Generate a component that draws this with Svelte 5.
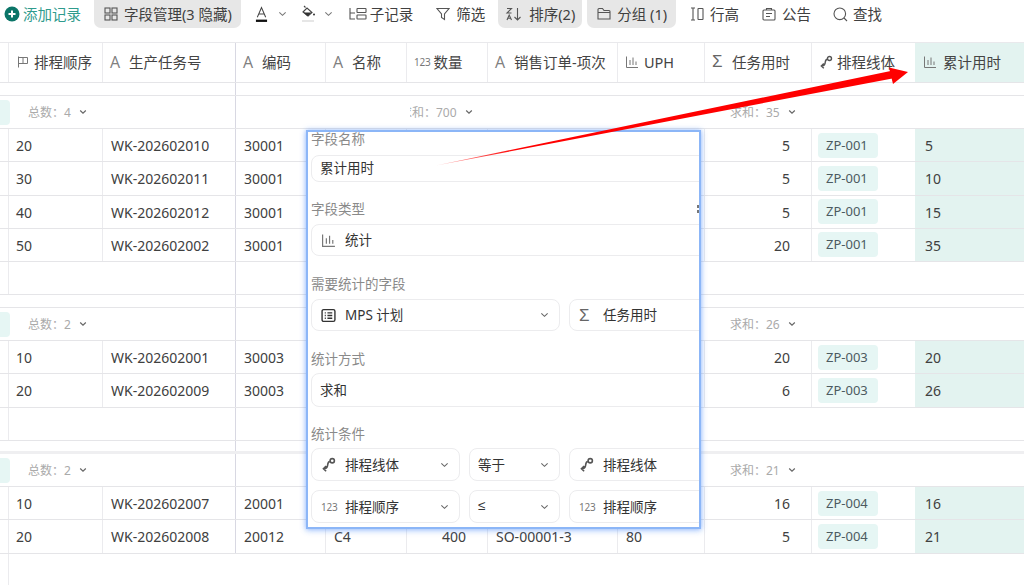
<script>
  const cols = [
    { t: '排程顺序', i: 'flag' }, { t: '生产任务号', i: 'A' }, { t: '编码', i: 'A' }, { t: '名称', i: 'A' },
    { t: '数量', i: '123' }, { t: '销售订单-项次', i: 'A' }, { t: 'UPH', i: 'bar' }, { t: '任务用时', i: 'sum' },
    { t: '排程线体', i: 'line' }, { t: '累计用时', i: 'bar' }
  ];
  const groups = [
    { total: 4, qty: '700', sum: 35, thick: false, rows: [
      [20,'WK-202602010','30001','','','','',5,'ZP-001',5],
      [30,'WK-202602011','30001','','','','',5,'ZP-001',10],
      [40,'WK-202602012','30001','','','','',5,'ZP-001',15],
      [50,'WK-202602002','30001','','','','',20,'ZP-001',35]
    ]},
    { total: 2, qty: '', sum: 26, thick: false, rows: [
      [10,'WK-202602001','30003','','','','',20,'ZP-003',20],
      [20,'WK-202602009','30003','','','','',6,'ZP-003',26]
    ]},
    { total: 2, qty: '', sum: 21, thick: true, rows: [
      [10,'WK-202602007','20001','','','','',16,'ZP-004',16],
      [20,'WK-202602008','20012','C4',400,'SO-00001-3',80,5,'ZP-004',21]
    ]}
  ];
</script>

{#snippet icon(n)}
  {#if n === 'A'}<span class="ic-a">A</span>
  {:else if n === '123'}<span class="ic-n">123</span>
  {:else if n === 'sum'}<span class="ic-s">Σ</span>
  {:else if n === 'flag'}
    <svg class="ic" viewBox="0 0 14 14"><path d="M2.500 1.500v11M2.500 2.500h9v6h-9M7 2.500v6" /></svg>
  {:else if n === 'bar'}
    <svg class="ic bar" viewBox="0 0 14 14"><path d="M1.500 1.500v11h11.500M5 5v5M8 2.500v7.500M11 6.500v3.500" /></svg>
  {:else if n === 'line'}
    <svg class="ic line" viewBox="0 0 14 14"><circle cx="10.500" cy="3.500" r="2" /><path d="M8.300 4.200c-2.300.3-1.800 2.500-2.300 4.300-.3 1.300-1.500 2.500-3.500 2.500M4.800 8.500 2.300 11l2.500 2.300" /></svg>
  {:else if n === 'list'}
    <svg class="ic dark" viewBox="0 0 14 14"><rect x="1" y="1.500" width="12" height="11" rx="1.500" /><path d="M3.500 4.500h1M6 4.500h4.500M3.500 7h1M6 7h4.500M3.500 9.500h1M6 9.500h4.500" /></svg>
  {/if}
{/snippet}

{#snippet chev(cls)}
  <svg class="chev {cls}" viewBox="0 0 10 6"><path d="M1.500 1.200 5 4.500l3.500-3.300" /></svg>
{/snippet}

<div class="page">
  <div class="toolbar">
    <div class="tool add">
      <svg class="plus" viewBox="0 0 16 16"><circle cx="8" cy="8" r="7.500" /><path d="M8 4.500v7M4.500 8h7" /></svg>
      <span>添加记录</span>
    </div>
    <div class="tool btn manage">
      <svg class="tic grid4" viewBox="0 0 14 14"><rect x="1" y="1" width="5" height="5" /><rect x="8" y="1" width="5" height="5" /><rect x="1" y="8" width="5" height="5" /><rect x="8" y="8" width="5" height="5" /></svg>
      <span>字段管理(3 隐藏)</span>
    </div>
    <div class="tool fontc">
      <svg class="fa" viewBox="0 0 14 18"><path class="thin" d="M2.500 12 7 1.500 11.500 12M4 8.500h6" /><rect x="1" y="14.500" width="12" height="2.500" /></svg>
      {@render chev('c1')}
    </div>
    <div class="tool bucket">
      <svg class="fb" viewBox="0 0 15 18"><path class="thin" d="M3 1l1.500 1.500M2 7l4-4 5 4.500-4 3.500z" /><path d="M2.500 7.500h8l-3.500 3.300h-1z" /><circle cx="13" cy="9.500" r="1" /><rect class="pale" x="1" y="15" width="12" height="2" /></svg>
      {@render chev('c2')}
    </div>
    <div class="tool sub">
      <svg class="tic w18" viewBox="0 0 18 14"><path d="M1 1v11h5M1 6h5" /><rect x="8" y="1.500" width="9" height="4" rx=".5" /><rect x="8" y="8" width="9" height="4" rx=".5" /></svg>
      <span>子记录</span>
    </div>
    <div class="tool filter">
      <svg class="tic" viewBox="0 0 14 14"><path d="M1 1.500h12L8.500 7v5.500l-3 -2V7z" /></svg>
      <span>筛选</span>
    </div>
    <div class="tool btn sort">
      <svg class="tic w18" viewBox="0 0 18 14"><path d="M2 1.500h4.500L2 6h4.500M2 13l2.200-5 2.300 5M2.800 11.300h2.800M12.500 1v12M9.500 10l3 3 3-3" /></svg>
      <span>排序(2)</span>
    </div>
    <div class="tool btn grouped">
      <svg class="tic" viewBox="0 0 14 14"><path d="M1 12V2.500a1 1 0 0 1 1-1h3.500L7 3.500h5a1 1 0 0 1 1 1V12zM1 5.500h12" /></svg>
      <span>分组 (1)</span>
    </div>
    <div class="tool rowh">
      <svg class="tic" viewBox="0 0 14 14"><path d="M1 1h4M1 13h4M3 1v12" /><rect x="8" y="1.500" width="5" height="11" rx=".5" /></svg>
      <span>行高</span>
    </div>
    <div class="tool notice">
      <svg class="tic" viewBox="0 0 14 14"><rect x="1" y="3" width="12" height="10" rx="1" /><path d="M4.500 3V1.500h5V3M4 6.500h6M4 9.500h4" /></svg>
      <span>公告</span>
    </div>
    <div class="tool search">
      <svg class="tic" viewBox="0 0 15 15"><circle cx="6.800" cy="6.800" r="5.800" /><path d="m11 11 3 3" /></svg>
      <span>查找</span>
    </div>
  </div>

  <div class="table">
    <div class="row head">
      <div class="cell lead"></div>
      {#each cols as c, i}
        <div class="cell hc" class:frozen={i === 1} class:accent={i === 9}>
          {@render icon(c.i)}<span>{c.t}</span>
        </div>
      {/each}
    </div>

    {#each groups as g, gi}
      {#if gi === 0}
        <div class="gap"><div class="fz"></div></div>
      {/if}
      <div class="sumrow">
        <div class="pillstub"></div>
        <div class="sum s1">
          <span>总数：{g.total}</span>{@render chev('sc')}
        </div>
        <div class="sum s2">
          {#if g.qty}<div class="clip"><span>求和：{g.qty}</span>{@render chev('sc')}</div>{/if}
        </div>
        <div class="sum s3">
          <span>求和：{g.sum}</span>{@render chev('sc')}
        </div>
      </div>
      {#each g.rows as r}
        <div class="row data">
          <div class="cell lead"></div>
          <div class="cell">{r[0]}</div>
          <div class="cell pad frozen">{r[1]}</div>
          <div class="cell pad">{r[2]}</div>
          <div class="cell pad">{r[3]}</div>
          <div class="cell num">{r[4]}</div>
          <div class="cell pad">{r[5]}</div>
          <div class="cell pad">{r[6]}</div>
          <div class="cell num">{r[7]}</div>
          <div class="cell pillc"><span class="pill">{r[8]}</span></div>
          <div class="cell pad accent">{r[9]}</div>
        </div>
      {/each}
      {#if gi < 2}
        <div class="blank"><div class="lead"></div><div class="fz2"></div></div>
        <div class="gap" class:short={gi === 1}><div class="fz"></div></div>
      {:else}
        <div class="tail"><div class="lead"></div></div>
      {/if}
    {/each}
  </div>

  <div class="popup">
    <div class="lab f1">字段名称</div>
    <div class="inp h27"><span>累计用时</span></div>

    <div class="lab f2">字段类型</div>
    <div class="inp h32 withi"><span class="pi">{@render icon('bar')}</span><span>统计</span></div>
    <div class="grip"></div>

    <div class="lab f3">需要统计的字段</div>
    <div class="fields">
      <div class="inp h32 wide withi"><span class="pi">{@render icon('list')}</span><span>MPS 计划</span>{@render chev('pc')}</div>
      <div class="inp h32 rest withi"><span class="pi">{@render icon('sum')}</span><span>任务用时</span></div>
    </div>

    <div class="lab f3">统计方式</div>
    <div class="inp h34 m4"><span>求和</span></div>

    <div class="lab f2">统计条件</div>
    <div class="fields m4">
      <div class="inp h33 mid withi"><span class="pi">{@render icon('line')}</span><span>排程线体</span>{@render chev('pc')}</div>
      <div class="inp h33 op"><span>等于</span>{@render chev('pc')}</div>
      <div class="inp h33 rest withi"><span class="pi">{@render icon('line')}</span><span>排程线体</span></div>
    </div>
    <div class="fields m9">
      <div class="inp h33 mid withi"><span class="pi">{@render icon('123')}</span><span>排程顺序</span>{@render chev('pc')}</div>
      <div class="inp h33 op"><span class="le">≤</span>{@render chev('pc')}</div>
      <div class="inp h33 rest withi"><span class="pi">{@render icon('123')}</span><span>排程顺序</span></div>
    </div>
  </div>

  <svg class="arrow" viewBox="0 0 1024 585">
    <defs>
      <linearGradient id="fade" x1="436" y1="165" x2="640" y2="125" gradientUnits="userSpaceOnUse">
        <stop offset="0" stop-color="#ff0000" stop-opacity=".35" />
        <stop offset=".4" stop-color="#ff0000" />
      </linearGradient>
    </defs>
    <polygon fill="url(#fade)" points="436,165.500 893,70.500 895,78" />
    <polygon fill="#ff0000" points="908,72 889,67.500 893,84" />
  </svg>
</div>

<style>
  :global(body) { margin: 0; background: #fff; }
  .page {
    position: relative;
    width: 1024px;
    height: 585px;
    overflow: hidden;
    font-family: "Noto Sans", "Noto Sans CJK SC", sans-serif;
    font-size: 14px;
    color: #404040;
    background: #fff;
  }

  /* toolbar */
  .toolbar { display: flex; align-items: flex-start; height: 42px; box-sizing: border-box; padding-left: 4px; color: #404040; font-size: 14.500px; }
  .tool { display: flex; align-items: center; height: 28px; white-space: nowrap; flex: none; }
  .tool span { position: relative; top: -1px; }
  .btn { background: #e7e7e7; border-radius: 0 0 7px 7px; }
  .plus { width: 16px; height: 16px; margin-right: 3px; }
  .plus circle { fill: #0b7568; }
  .plus path { stroke: #fff; stroke-width: 2; fill: none; }
  .add { color: #2f9b8d; }
  .tic { width: 14px; height: 14px; flex: none; fill: none; stroke: #555; stroke-width: 1.100; }
  .tic.w18 { width: 18px; }
  .manage { margin-left: 13px; padding: 0 9px 0 10px; gap: 6px; }
  .fontc { margin-left: 14px; }
  .fa { width: 13px; height: 17px; }
  .fa .thin, .fb .thin { fill: none; stroke: #444; stroke-width: 1.100; }
  .fa rect { fill: #111; }
  .bucket { margin-left: 14px; }
  .fb { width: 15px; height: 18px; }
  .fb path:not(.thin), .fb circle { fill: #333; }
  .fb .pale { fill: #e6e6e6; }
  .chev { fill: none; stroke: #777; stroke-width: 1.200; flex: none; width: 9px; height: 6px; }
  .c1 { margin-left: 10px; }
  .c2 { margin-left: 8px; }
  .sub { margin-left: 16px; gap: 3px; }
  .filter { margin-left: 23px; gap: 6px; }
  .sort { margin-left: 13px; padding: 0 7px 0 7px; gap: 6px; }
  .grouped { margin-left: 5px; padding: 0 9px 0 10px; gap: 6px; }
  .rowh { margin-left: 14px; gap: 6px; }
  .notice { margin-left: 23px; gap: 6px; }
  .search { margin-left: 22px; gap: 5px; }
  .search .tic { width: 15px; height: 15px; }

  /* table */
  .table { border-top: 1px solid #e9e9ec; display: flex; flex-direction: column; height: 543px; box-sizing: border-box; }
  .row {
    display: grid;
    grid-template-columns: 9px 94px 133px 90px 81px 81px 130px 87px 107px 104px 108px;
    border-bottom: 1px solid #e5e5e8;
    box-sizing: border-box;
    flex: none;
  }
  .head { height: 40px; }
  .data { height: 33.250px; }
  .cell {
    border-right: 1px solid #ebebee;
    display: flex;
    align-items: center;
    padding: 1px 0 0 7px;
    white-space: nowrap;
    overflow: hidden;
    box-sizing: border-box;
    min-width: 0;
  }
  .cell.lead { padding: 0; }
  .hc { font-size: 14.500px; gap: 4px; color: #444; padding: 0 0 2px 7px; }
  .hc .ic-a { width: 15px; }
  .hc .ic-s { width: 16px; }
  .hc .ic.bar { margin-right: 1px; }
  .hc .ic-n { margin-right: -1px; }
  .frozen { border-right-color: #d8d8e2; }
  .accent { background: #e3f3f0; border-right: 0; margin-left: -1px; padding-left: 10px; }
  .hc.accent { padding-left: 8px; gap: 5px; }
  .pad { padding-left: 8px; }
  .accent.pad { padding-left: 10px; }
  .num { justify-content: flex-end; padding: 1px 21px 0 0; }
  .cell.pillc { padding: 0 0 0 6px; }
  .pill { background: #e6f6f4; color: #4c5a60; font-size: 13px; height: 25px; line-height: 25px; padding: 0 10px 0 8px; border-radius: 4px; }

  .gap { height: 12px; border-bottom: 1px solid #e5e5e8; flex: none; }
  .gap.short { height: 10.500px; border-bottom: 3px solid #efeff1; }
  .fz, .fz2 { width: 1px; background: #d8d8e2; height: 100%; margin-left: 235px; }
  .sumrow {
    height: 33px;
    flex: none;
    display: grid;
    grid-template-columns: 8px 228px 170px 81px 130px 87px 320px;
    box-sizing: border-box;
    border-bottom: 1px solid #e5e5e8;
    align-items: center;
  }
  .pillstub { width: 10px; height: 25px; background: #e6f6f4; border-radius: 0 4px 4px 0; }
  .sum { grid-row: 1; display: flex; align-items: center; gap: 8px; color: #aaa; font-size: 12px; white-space: nowrap; height: 100%; }
  .sc { stroke: #666; stroke-width: 1.500; width: 8px; height: 6px; }
  .s1 { grid-column: 2; padding-left: 20px; border-right: 1px solid #d8d8e2; }
  .s2 { grid-column: 4 / 6; min-width: 0; }
  .clip { overflow: hidden; margin-left: 4px; display: flex; align-items: center; gap: 8px; height: 100%; }
  .clip span { margin-left: -10px; }
  .s3 { grid-column: 6 / 8; padding-left: 26px; margin-left: 87px; }

  .blank { height: 33px; flex: none; box-sizing: border-box; border-bottom: 1px solid #e5e5e8; display: flex; }
  .blank .lead, .tail .lead { width: 9px; border-right: 1px solid #ebebee; box-sizing: border-box; height: 100%; }
  .blank .fz2 { margin-left: 226px; }
  .tail { flex: 1; }

  /* popup */
  .popup {
    position: absolute;
    left: 306px;
    top: 130px;
    width: 395px;
    height: 399px;
    box-sizing: border-box;
    border: 2px solid #8cb6f7;
    box-shadow: 0 0 5px rgba(90, 150, 250, .55), 0 2px 6px rgba(90, 150, 250, .3);
    background: #fff;
    overflow: hidden;
    padding-left: 3px;
    font-size: 13.500px;
    color: #333;
  }
  .lab { height: 20px; line-height: 20px; color: #8a8a8a; font-size: 13.500px; margin-bottom: 5px; }
  .f1 { margin-top: -3px; margin-bottom: 6px; }
  .f2 { margin-top: 17px; }
  .f3 { margin-top: 18px; }
  .inp {
    display: flex;
    align-items: center;
    box-sizing: border-box;
    border: 1px solid #ececee;
    border-radius: 8px;
    width: 420px;
    padding: 0 0 2px 8px;
    flex: none;
    white-space: nowrap;
  }
  .inp.h27 { padding-bottom: 4px; }
  .withi { padding-left: 9px; }
  .pi { width: 24px; flex: none; display: flex; align-items: center; position: relative; top: 1px; }
  .h27 { height: 27px; }
  .h32 { height: 32px; }
  .h33 { height: 33px; }
  .h34 { height: 34px; }
  .m4 { margin-top: -1px; }
  .m9 { margin-top: 9px; }
  .fields { display: flex; gap: 9px; }
  .inp.wide { width: 249px; }
  .inp.mid { width: 149px; }
  .inp.op { width: 91px; }
  .inp.rest { width: 200px; }
  .le { font-family: "Liberation Sans", sans-serif; }
  .pc { margin-left: auto; margin-right: 10px; stroke: #666; width: 9px; position: relative; top: 1px; }
  .grip {
    position: absolute;
    right: -1px;
    top: 72px;
    width: 4px;
    height: 10px;
    background-image: radial-gradient(circle, #777 1.200px, transparent 1.300px);
    background-size: 4px 5px;
  }
  .popup .ic { width: 15px; height: 15px; stroke-width: 1.100; }

  .ic { width: 14px; height: 14px; flex: none; fill: none; stroke: #777; stroke-width: 1; }
  .ic.line { stroke: #555; stroke-width: 1.400; }
  .ic.dark { stroke: #333; stroke-width: 1.200; width: 15px; height: 15px; }
  .popup .ic.line { stroke-width: 1.500; }
  .popup .ic.dark { stroke-width: 1.300; }
  .ic-a { color: #808080; font-size: 16px; font-weight: 400; font-family: "Open Sans", sans-serif; width: 14px; flex: none; line-height: 1; }
  .ic-n { color: #777; font-size: 10px; letter-spacing: -.2px; flex: none; }
  .ic-s { color: #666; font-size: 17px; font-family: "Liberation Sans", sans-serif; width: 14px; flex: none; line-height: 1; }

  .arrow { position: absolute; left: 0; top: 0; width: 1024px; height: 585px; pointer-events: none; }
</style>
